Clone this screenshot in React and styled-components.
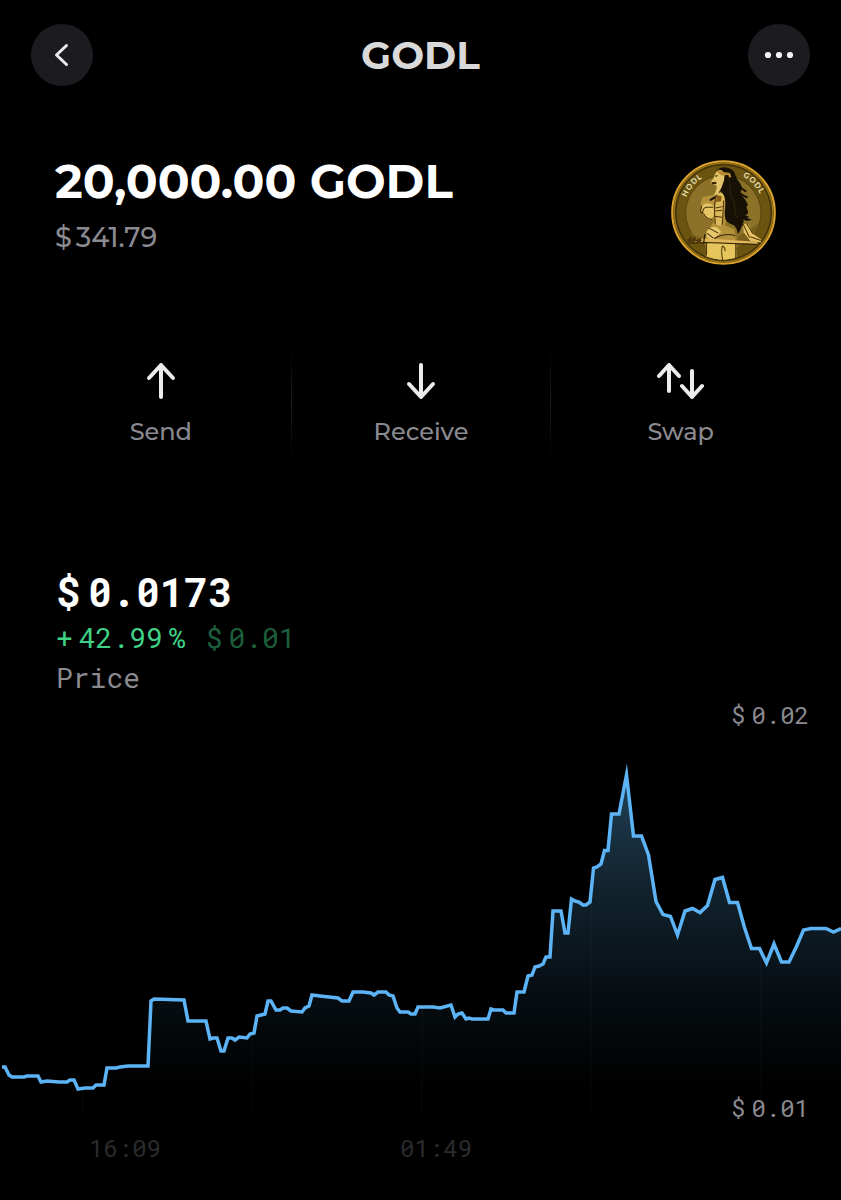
import React from "react";
import styled, { createGlobalStyle } from "styled-components";

const PRICE_POINTS = [
  [2, 367], [5, 367], [9, 375], [12, 377], [24, 377], [27, 376], [38, 376], [41, 382], [47, 381], [59, 382],
  [67, 382], [70, 380], [74, 380], [78, 389], [85, 388], [93, 388], [96, 385], [104, 385], [107, 368], [116, 368],
  [120, 367], [128, 366], [148, 366], [151, 301], [154, 299], [184, 300], [188, 321], [206, 321], [210, 339],
  [213, 338], [217, 338], [221, 351], [224, 351], [228, 338], [232, 338], [235, 340], [239, 337], [247, 338],
  [250, 334], [254, 333], [257, 316], [265, 314], [268, 301], [271, 301], [276, 310], [280, 310], [283, 308],
  [287, 308], [291, 311], [302, 312], [305, 308], [309, 306], [312, 295], [320, 296], [338, 298], [342, 301],
  [349, 301], [353, 292], [363, 292], [371, 293], [374, 295], [378, 292], [386, 292], [389, 295], [393, 296],
  [397, 308], [400, 312], [408, 312], [411, 314], [415, 314], [418, 307], [433, 307], [440, 308], [451, 305],
  [455, 317], [458, 314], [462, 313], [466, 319], [469, 318], [472, 319], [488, 319], [491, 309], [494, 310],
  [503, 310], [506, 313], [514, 313], [517, 292], [524, 292], [528, 276], [532, 275], [535, 267], [539, 266],
  [543, 264], [546, 257], [550, 257], [553, 211], [561, 211], [565, 233], [568, 233], [571.5, 199], [575, 201],
  [579, 202], [583, 205], [586, 205], [590, 202], [593.5, 168], [597, 167], [601, 164], [604.5, 150.5],
  [608, 150.5], [611.5, 114], [619, 114], [626.5, 75], [633.5, 136], [641.5, 136], [648.5, 155], [656, 201.5],
  [663, 214.5], [670.5, 216.5], [677.5, 235], [685, 211], [692.5, 208.5], [700, 212.5], [707.5, 205.5],
  [715, 179.5], [722.5, 177.5], [729.5, 202.5], [737.5, 202.5], [744.5, 227.5], [751.5, 248.5], [759.5, 248.5],
  [766.5, 263], [774, 244], [781.5, 262], [789, 262], [796.5, 246.5], [803.5, 230], [811, 228.5], [826, 228.5],
  [833.5, 232], [841, 228.5],
];

const GRID_LINES = [83, 252, 422, 591, 761];

const linePath = "M" + PRICE_POINTS.map((point) => point.join(" ")).join("L");
const areaPath = `${linePath}V412H2Z`;

const BackIcon = () => (
  <svg width="28" height="28" viewBox="0 0 28 28" fill="none" aria-hidden="true">
    <path d="M18.5 4.500 8.500 14l10 9.500" stroke="#ececee" strokeWidth="3" strokeLinecap="round" strokeLinejoin="round" />
  </svg>
);

const MoreIcon = () => (
  <svg width="30" height="8" viewBox="0 0 30 8" fill="#f4f4f6" aria-hidden="true">
    <circle cx="4" cy="4" r="3.1" />
    <circle cx="15" cy="4" r="3.1" />
    <circle cx="26" cy="4" r="3.1" />
  </svg>
);

const SendIcon = () => (
  <ActionIcon viewBox="0 0 48 40" aria-hidden="true">
    <path d="M24 36V4M12 17 24 4l12 13" />
  </ActionIcon>
);

const ReceiveIcon = () => (
  <ActionIcon viewBox="0 0 48 40" aria-hidden="true">
    <path d="M24 4v32M12 23l12 13 12-13" />
  </ActionIcon>
);

const SwapIcon = () => (
  <ActionIcon viewBox="0 0 48 40" aria-hidden="true">
    <path d="M12 30V4M2 15 12 4l10 11M35 10v26M25 25l10 11 10-11" />
  </ActionIcon>
);

const Coin = () => (
  <CoinImage viewBox="34 29 313 313" role="img" aria-label="GODL coin">
    <defs>
      <path id="coin-left" d="M80 140A118 118 0 0 1 156 70" />
      <path id="coin-right" d="M248 78A118 118 0 0 1 310 164" />
    </defs>
    <circle cx="190.500" cy="185.500" r="153" fill="#54400c" stroke="#dba32c" strokeWidth="6" />
    <circle cx="190.500" cy="185.500" r="147" fill="none" stroke="#9a7318" strokeWidth="4" />
    <circle cx="190.500" cy="185.500" r="142" fill="#6b5310" stroke="#2c2004" strokeWidth="2" />
    <circle cx="190" cy="187" r="112" fill="#8b7228" stroke="#4a390b" strokeWidth="2" />
    <path d="M83 222a112 112 0 0 0 52 62l1-24-40-4ZM232 290a112 112 0 0 0 62-72l-30 20-30 20Z" fill="#78601a" />
    {/* torso and legs */}
    <path d="M165 130l24-10 8 34 4 40-6 30 28 12 6 44 1 40c-30 9-62 8-91-3l-2-44 12-42 14-20-10-20-22-10-9-22 6-20 24-4Z" fill="#b5913a" />
    <path d="M139 276l88 2 1 42c-28 9-60 8-89-4Z" fill="#e6c55d" />
    <path d="M187 285c-3 12-2 28 1 43M227 278v44M140 276v38M187 285c5 2 9 8 8 16" fill="none" stroke="#493305" strokeWidth="3" />
    {/* hair */}
    <path d="M169 61c10-13 32-14 47-3 10 8 10 23 21 36 11 14 9 25 2 34 7 7 13 13 19 24 8 10-3 14 4 26 5 10-1 15-9 15 5 10 12 12 22 12-10 8-17 6-25 1 2 10-2 18-7 24-2 8-5 14-10 20-1-14-5-19-11-26-10-5-22-8-26-20-5-21 3-36-1-57l-14-26 4-18-4-22Z" fill="#171004" />
    <path d="M222 88c11 16 16 23 34 34M224 111c10 13 21 23 36 29M228 145c10 10 19 16 32 17M224 170c12 18 18 23 38 29M180 118c-4 15-14 23-28 30" fill="none" stroke="#171004" strokeWidth="6" strokeLinecap="round" />
    <path d="M205 84c12 22-2 40 12 60s0 38 16 58" fill="none" stroke="#3b2c0a" strokeWidth="2" />
    {/* face, neck and headband */}
    <path d="M176 58c-9 5-12 18-16 27l-8 11 5 7 12 1 2 7-10 28 14-10 10-19 7-20 2-18-8-12Z" fill="#e3c46b" />
    <path d="M154 95l14-1 2 6-13 3Z" fill="#3b2205" />
    <path d="M164 76l11-2-6 6Z" fill="#4a2e07" />
    <path d="M175 57l11 7 24 4 4 12-6 2-4-8-18 1-14-9Z" fill="#b98a2e" />
    {/* bust, arm and armour */}
    <path d="M126 166c10-13 32-9 37 4 2 12-1 28-10 38-10-1-18-6-22-16l-8-12Z" fill="#e4c465" />
    <path d="M172 129c12-8 22 2 22 17l-5 48-6 31-16-3-2-48Z" fill="#dcba5c" />
    <path d="M126 165l-4 16 8 9c-4-10 1-19 10-20h20M132 190c5 11 15 16 24 16M168 134l-5 37 3 50M191 150l-4 72M166 172l22-4M166 181l20-2M164 197l22 3" fill="none" stroke="#4b3205" strokeWidth="3" />
    <path d="M170 134l15 3-2 15-14 2Z" fill="#855814" />
    <path d="M140 242c9-14 24-17 35-9l9 10-26 25-18-8Z" fill="#e7c86c" />
    <path d="M147 232l28 15M142 248l18 14M162 263c20-10 42-16 63-8" fill="none" stroke="#38270a" strokeWidth="3" />
    <path d="M248 218l18 4 12 27 25 17-1 8-31-3-20-26Z" fill="#e4c263" />
    <path d="M248 218l20 42M260 219l18 30M270 258l32 11" fill="none" stroke="#503707" strokeWidth="3" />
    {/* sword */}
    <path d="M88 265l50-2 154 10-2 6-155-6-45 1Z" fill="#e1b95c" />
    <path d="M88 277l50-2 152 6" fill="none" stroke="#332408" strokeWidth="3" />
    <path d="M82 267l10-9 6 7 8-8 2 9 13-4 6 6-8 6-14-3-5 8-5-6-10 4Z" fill="#4d370b" />
    <path d="M135 250l-4 29" stroke="#322206" strokeWidth="4" />
    <CoinText>
      <textPath href="#coin-left">HODL</textPath>
    </CoinText>
    <CoinText>
      <textPath href="#coin-right">GODL</textPath>
    </CoinText>
  </CoinImage>
);

const PriceChart = () => (
  <Plot viewBox="0 0 841 423" preserveAspectRatio="none" role="img" aria-label="GODL price chart">
    <defs>
      <linearGradient id="area-fill" gradientUnits="userSpaceOnUse" x1="0" y1="75" x2="0" y2="385">
        <stop offset="0" stopColor="#5cb3f5" stopOpacity="0.36" />
        <stop offset="0.35" stopColor="#52a4d8" stopOpacity="0.22" />
        <stop offset="0.7" stopColor="#4d9bd0" stopOpacity="0.09" />
        <stop offset="1" stopColor="#4d9bd0" stopOpacity="0" />
      </linearGradient>
      <clipPath id="area-clip">
        <path d={areaPath} />
      </clipPath>
    </defs>
    <path d={areaPath} fill="url(#area-fill)" />
    <g clipPath="url(#area-clip)" stroke="#fff" strokeOpacity="0.02" strokeWidth="2">
      {GRID_LINES.map((x) => (
        <path key={x} d={`M${x} 0V412`} />
      ))}
    </g>
    <path
      d={linePath}
      fill="none"
      stroke="#5cb3f5"
      strokeWidth="3.5"
      strokeMiterlimit="10"
      vectorEffect="non-scaling-stroke"
    />
  </Plot>
);

const App = () => {
  return (
    <>
      <GlobalStyle />
      <Screen>
        <Header>
          <RoundButton type="button" aria-label="Back">
            <BackIcon />
          </RoundButton>
          <Title>GODL</Title>
          <RoundButton type="button" aria-label="More">
            <MoreIcon />
          </RoundButton>
        </Header>

        <Balance>
          <div>
            <Amount>20,000.00 GODL</Amount>
            <FiatValue>
              <span>$</span>
              <span>341.79</span>
            </FiatValue>
          </div>
          <Coin />
        </Balance>

        <Actions>
          <ActionButton type="button">
            <SendIcon />
            Send
          </ActionButton>
          <ActionButton type="button">
            <ReceiveIcon />
            Receive
          </ActionButton>
          <ActionButton type="button">
            <SwapIcon />
            Swap
          </ActionButton>
        </Actions>

        <PriceSummary>
          <Price>
            <span>$</span>
            <span>0.0173</span>
          </Price>
          <Change>
            <Figure>
              <span>+</span>
              <span>42.99</span>
              <span>%</span>
            </Figure>
            <Figure $dim>
              <span>$</span>
              <span>0.01</span>
            </Figure>
          </Change>
          <PriceLabel>Price</PriceLabel>
        </PriceSummary>

        <Chart>
          <PriceChart />
          <Scale>
            <Figure>
              <span>$</span>
              <span>0.02</span>
            </Figure>
            <Figure>
              <span>$</span>
              <span>0.01</span>
            </Figure>
          </Scale>
        </Chart>
        <TimeAxis>
          <span>16:09</span>
          <span>01:49</span>
        </TimeAxis>
      </Screen>
    </>
  );
};

export default App;

const MONO = `"Roboto Mono", "DejaVu Sans Mono", monospace`;

const GlobalStyle = createGlobalStyle`
  * {
    box-sizing: border-box;
  }
  body {
    margin: 0;
    background-color: #000;
    font-family: Montserrat, Inter, sans-serif;
  }
  h1, h2, p {
    margin: 0;
  }
  button {
    border: none;
    padding: 0;
    font-family: inherit;
    cursor: pointer;
  }
`;

const Screen = styled.main`
  min-height: 100vh;
  background-color: #000;
  color: #fff;
`;

const Header = styled.header`
  display: flex;
  align-items: center;
  justify-content: space-between;
  padding: 24px 31px 0;
`;

const RoundButton = styled.button`
  display: flex;
  align-items: center;
  justify-content: center;
  width: 62px;
  height: 62px;
  border-radius: 50%;
  background-color: #1c1b20;
`;

const Title = styled.h1`
  color: #d9d9d9;
  font-size: 39px;
  line-height: 48px;
  font-weight: 700;
`;

const Balance = styled.section`
  display: flex;
  justify-content: space-between;
  padding: 74px 65px 0 55px;
`;

const Amount = styled.h2`
  font-size: 47px;
  line-height: 44px;
  font-weight: 700;
`;

const FiatValue = styled.p`
  display: flex;
  gap: 4px;
  margin-top: 16px;
  color: #8b8a90;
  font-size: 27px;
  line-height: 36px;
  font-weight: 500;
`;

const CoinImage = styled.svg`
  flex: none;
  width: 105px;
  height: 105px;
`;

const CoinText = styled.text`
  fill: #f0e4bd;
  font-family: Lato, sans-serif;
  font-size: 23px;
  font-weight: 700;
  letter-spacing: 3px;
`;

const Actions = styled.nav`
  display: grid;
  grid-template-columns: repeat(3, 1fr);
  margin-top: 79px;
  padding: 0 31px;
`;

const ActionButton = styled.button`
  display: flex;
  flex-direction: column;
  align-items: center;
  gap: 16px;
  padding: 17px 0 15px;
  background: none;
  color: #8b8a90;
  font-size: 24px;
  line-height: 30px;
  font-weight: 500;
  & + & {
    border-left: 1px solid;
    border-image: linear-gradient(#000, #1c1c20, #000) 1;
  }
`;

const ActionIcon = styled.svg`
  width: 48px;
  height: 40px;
  fill: none;
  stroke: #ececec;
  stroke-width: 4;
  stroke-linecap: round;
  stroke-linejoin: round;
`;

const PriceSummary = styled.section`
  margin-top: 104px;
  padding: 0 56px;
  font-family: ${MONO};
  font-size: 28px;
  line-height: 40px;
`;

const Price = styled.p`
  display: flex;
  gap: 8px;
  font-size: 40px;
  line-height: 52px;
  font-weight: 700;
`;

const Change = styled.p`
  display: flex;
  gap: 20px;
  color: #3fd186;
`;

const Figure = styled.span`
  display: flex;
  gap: 6px;
  opacity: ${(props) => (props.$dim ? 0.45 : 1)};
`;

const PriceLabel = styled.p`
  color: #8b8a90;
`;

const Chart = styled.section`
  display: grid;
  margin-top: 2px;
  & > * {
    grid-area: 1 / 1;
  }
`;

const Plot = styled.svg`
  display: block;
  width: 100%;
  height: 423px;
`;

const Scale = styled.div`
  display: flex;
  flex-direction: column;
  align-items: flex-end;
  justify-content: space-between;
  padding-right: 32px;
  color: #8b8a90;
  font-family: ${MONO};
  font-size: 24px;
  line-height: 30px;
`;

const TimeAxis = styled.div`
  display: flex;
  gap: 239px;
  padding: 10px 89px 36px;
  color: #2b2b2e;
  font-family: ${MONO};
  font-size: 24px;
  line-height: 30px;
`;
